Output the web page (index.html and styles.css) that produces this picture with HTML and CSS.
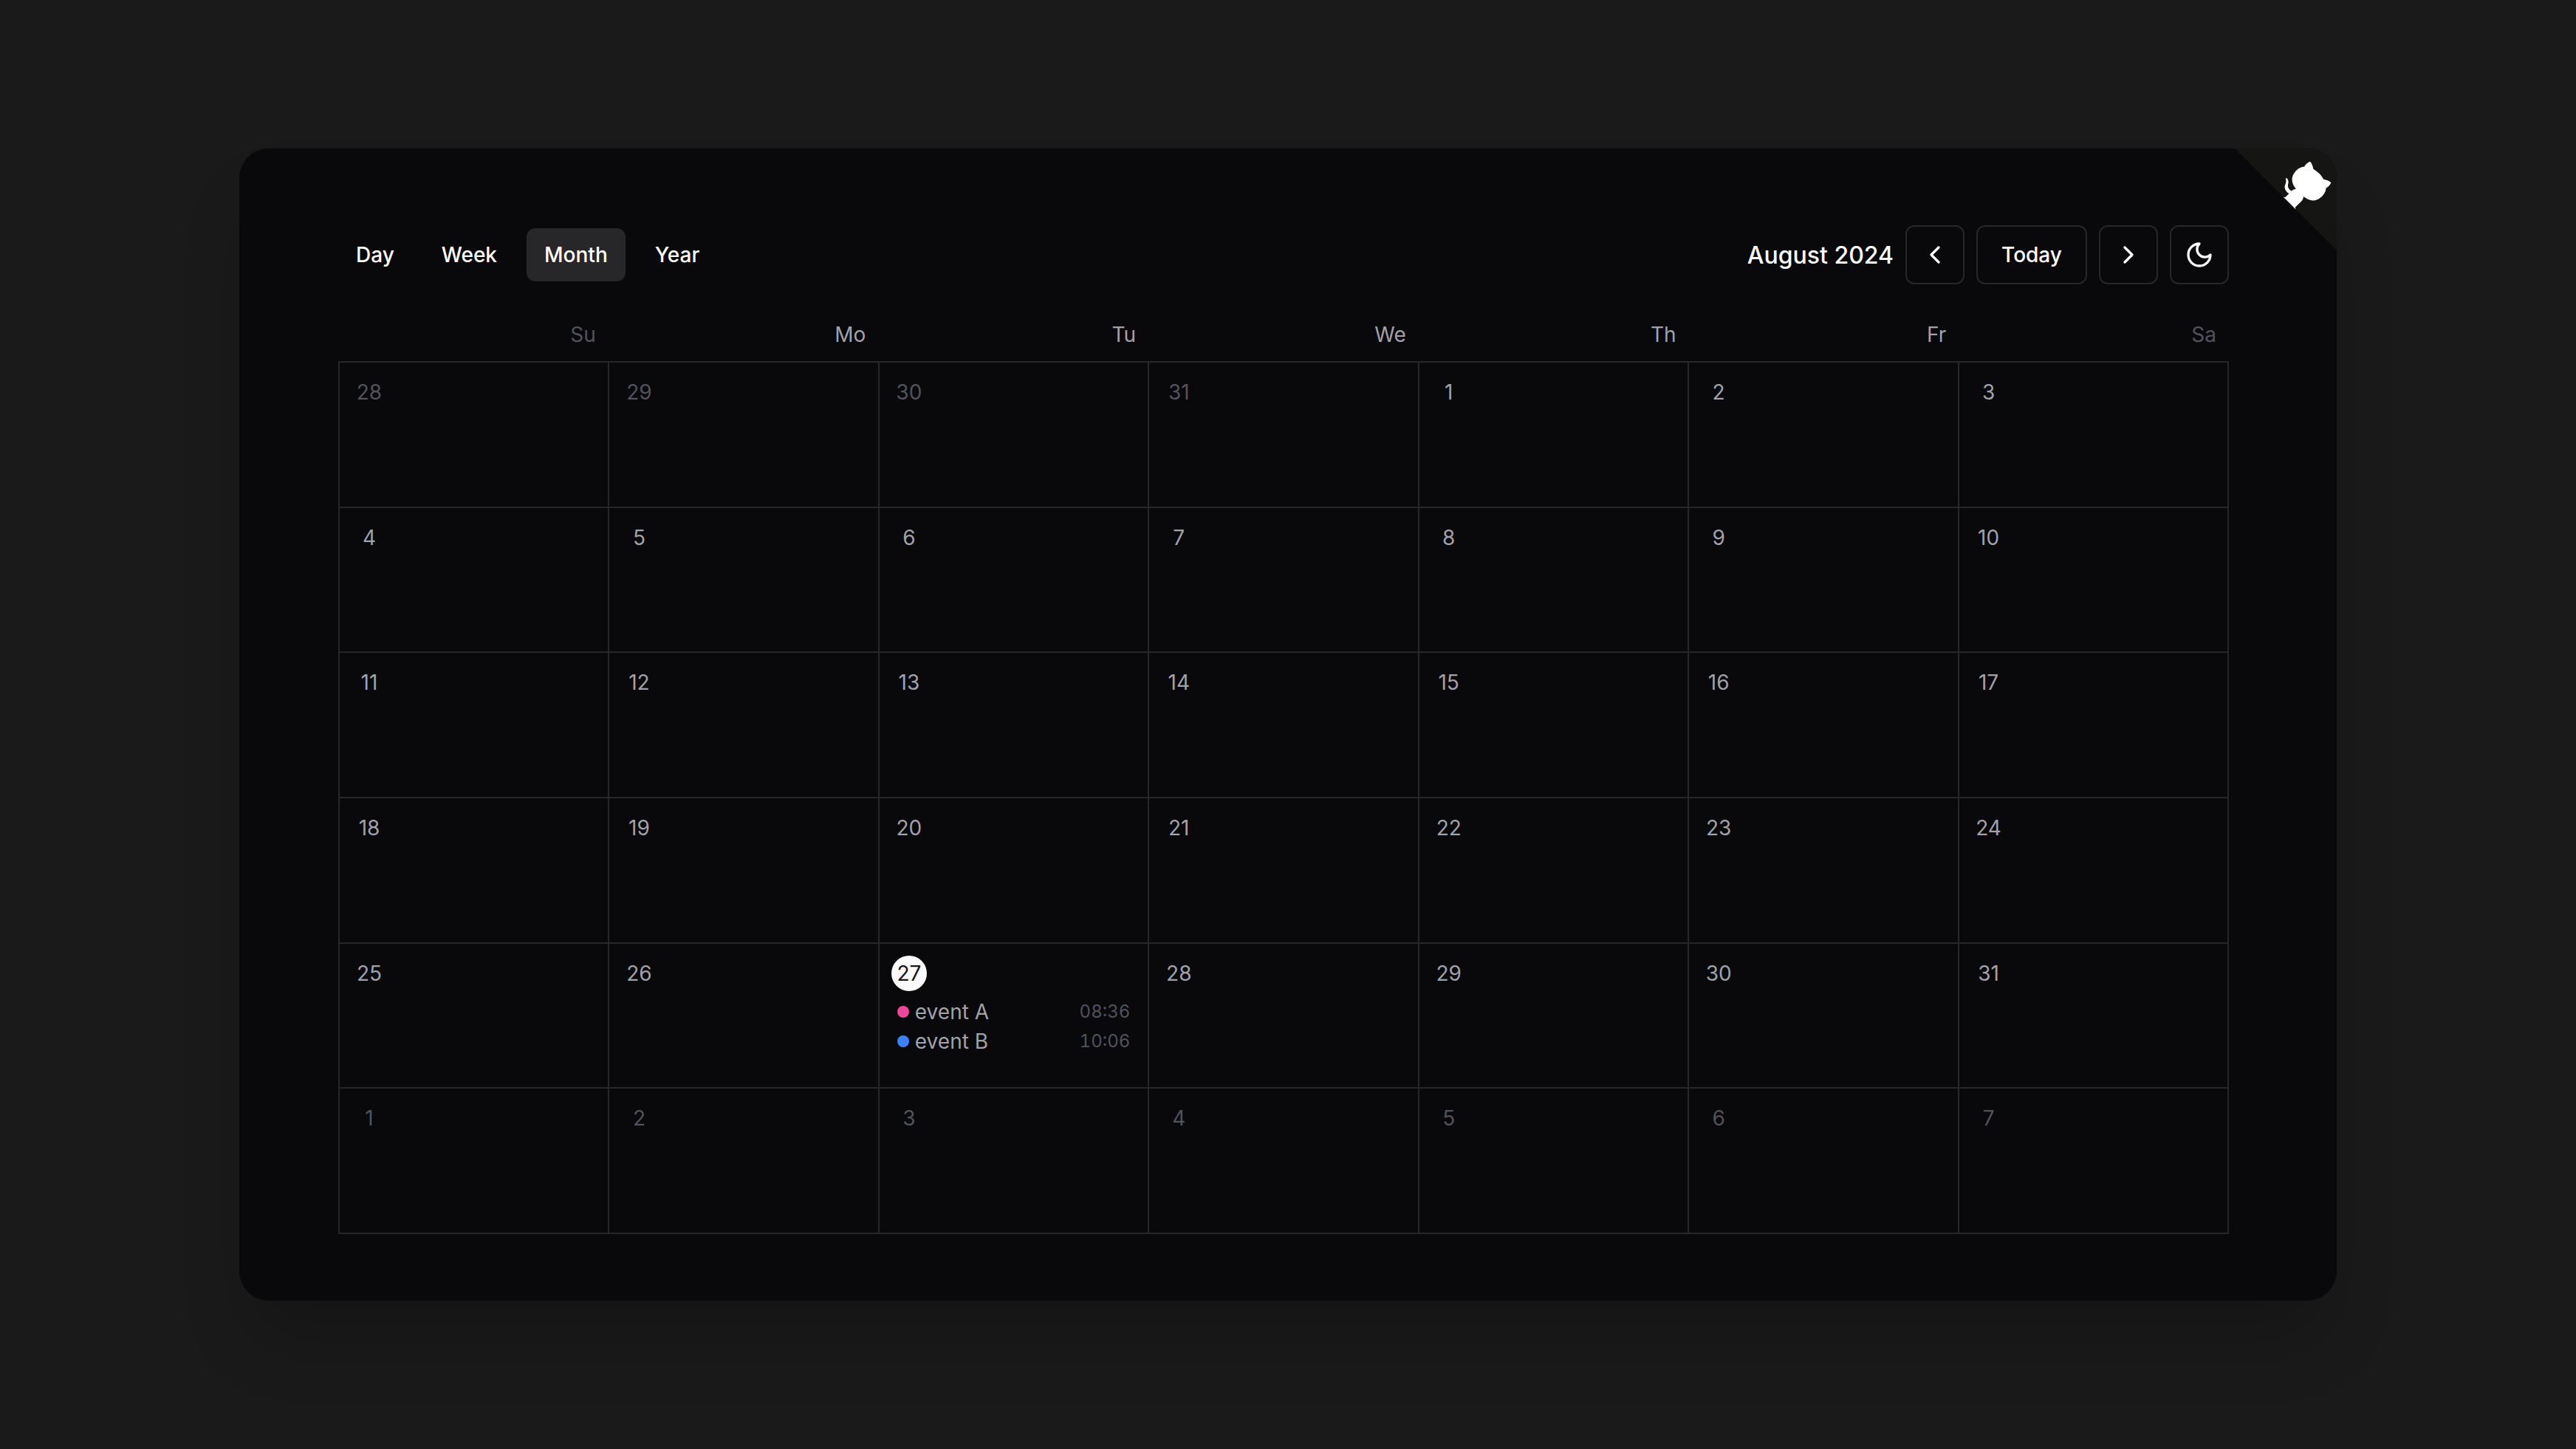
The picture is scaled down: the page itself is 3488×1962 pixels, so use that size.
FILE: index.html
```html
<!DOCTYPE html>
<html lang="en">
<head>
  <meta charset="UTF-8">
  <title>Calendar</title>
  <link rel="stylesheet" href="styles.css">
</head>
<body>
  <div class="card">
    <svg class="corner" width="160" height="160" viewBox="0 0 250 250" aria-hidden="true">
      <path d="M0,0 L115,115 L130,115 L142,142 L250,250 L250,0 Z"></path>
      <path class="octo" d="M128.3,109.0 C113.8,99.7 119.0,89.6 119.0,89.6 C122.0,82.7 120.5,78.6 120.5,78.6 C119.2,72.0 123.4,76.3 123.4,76.3 C127.3,80.9 125.5,87.3 125.5,87.3 C122.9,97.6 130.6,101.9 134.4,103.2"></path>
      <path class="octo" d="M115.0,115.0 C114.9,115.1 118.7,116.5 119.8,115.4 L133.7,101.6 C136.9,99.2 139.9,98.4 142.2,98.6 C133.8,88.0 127.5,74.4 143.8,58.0 C148.5,53.4 154.0,51.2 159.7,51.0 C160.3,49.4 163.2,43.6 171.4,40.1 C171.4,40.1 176.1,42.5 178.8,56.2 C183.1,58.6 187.2,61.8 190.9,65.4 C194.5,69.0 197.7,73.2 200.1,77.6 C213.8,80.2 216.3,84.9 216.3,84.9 C212.7,93.1 206.9,96.0 205.4,96.6 C205.1,102.4 203.0,107.8 198.3,112.5 C181.9,128.9 168.3,122.5 157.7,114.1 C157.9,116.9 156.7,120.9 152.7,124.9 L141.0,136.5 C139.8,137.7 141.6,141.9 141.8,141.8 Z"></path>
    </svg>

    <div class="toolbar">
      <div class="views">
        <button class="view">Day</button>
        <button class="view">Week</button>
        <button class="view active">Month</button>
        <button class="view">Year</button>
      </div>
      <div class="controls">
        <span class="title">August 2024</span>
        <button class="ctl square">
          <svg class="icon" viewBox="0 0 24 24"><path d="m15 18-6-6 6-6"></path></svg>
        </button>
        <button class="ctl today">Today</button>
        <button class="ctl square">
          <svg class="icon" viewBox="0 0 24 24"><path d="m9 18 6-6-6-6"></path></svg>
        </button>
        <button class="ctl square">
          <svg class="icon" viewBox="0 0 24 24"><path d="M12 3a6 6 0 0 0 9 9 9 9 0 1 1-9-9Z"></path></svg>
        </button>
      </div>
    </div>

    <div class="weekdays">
      <div class="weekday dim">Su</div>
      <div class="weekday">Mo</div>
      <div class="weekday">Tu</div>
      <div class="weekday">We</div>
      <div class="weekday">Th</div>
      <div class="weekday">Fr</div>
      <div class="weekday dim">Sa</div>
    </div>

    <div class="month">
      <div class="cell"><span class="date dim">28</span></div>
      <div class="cell"><span class="date dim">29</span></div>
      <div class="cell"><span class="date dim">30</span></div>
      <div class="cell"><span class="date dim">31</span></div>
      <div class="cell"><span class="date">1</span></div>
      <div class="cell"><span class="date">2</span></div>
      <div class="cell"><span class="date">3</span></div>

      <div class="cell"><span class="date">4</span></div>
      <div class="cell"><span class="date">5</span></div>
      <div class="cell"><span class="date">6</span></div>
      <div class="cell"><span class="date">7</span></div>
      <div class="cell"><span class="date">8</span></div>
      <div class="cell"><span class="date">9</span></div>
      <div class="cell"><span class="date">10</span></div>

      <div class="cell"><span class="date">11</span></div>
      <div class="cell"><span class="date">12</span></div>
      <div class="cell"><span class="date">13</span></div>
      <div class="cell"><span class="date">14</span></div>
      <div class="cell"><span class="date">15</span></div>
      <div class="cell"><span class="date">16</span></div>
      <div class="cell"><span class="date">17</span></div>

      <div class="cell"><span class="date">18</span></div>
      <div class="cell"><span class="date">19</span></div>
      <div class="cell"><span class="date">20</span></div>
      <div class="cell"><span class="date">21</span></div>
      <div class="cell"><span class="date">22</span></div>
      <div class="cell"><span class="date">23</span></div>
      <div class="cell"><span class="date">24</span></div>

      <div class="cell"><span class="date">25</span></div>
      <div class="cell"><span class="date">26</span></div>
      <div class="cell">
        <span class="date current">27</span>
        <ul class="events">
          <li class="event">
            <span class="dot pink"></span>
            <span class="event-name">event A</span>
            <span class="event-time">08:36</span>
          </li>
          <li class="event">
            <span class="dot blue"></span>
            <span class="event-name">event B</span>
            <span class="event-time">10:06</span>
          </li>
        </ul>
      </div>
      <div class="cell"><span class="date">28</span></div>
      <div class="cell"><span class="date">29</span></div>
      <div class="cell"><span class="date">30</span></div>
      <div class="cell"><span class="date">31</span></div>

      <div class="cell"><span class="date dim">1</span></div>
      <div class="cell"><span class="date dim">2</span></div>
      <div class="cell"><span class="date dim">3</span></div>
      <div class="cell"><span class="date dim">4</span></div>
      <div class="cell"><span class="date dim">5</span></div>
      <div class="cell"><span class="date dim">6</span></div>
      <div class="cell"><span class="date dim">7</span></div>
    </div>
  </div>
</body>
</html>
```

FILE: styles.css
```css
* {
  box-sizing: border-box;
}

html,
body {
  height: 100%;
}

body {
  margin: 0;
  display: flex;
  align-items: center;
  justify-content: center;
  background: #1a1a1a;
  font-family: Inter, "Liberation Sans", sans-serif;
  font-size: 28px;
  color: #a1a1aa;
}

.card {
  position: relative;
  width: 2840px;
  height: 1560px;
  padding: 104px 146px 90px 134px;
  background: #09090b;
  border-radius: 40px;
  overflow: hidden;
  box-shadow: 0 64px 100px -24px rgba(0, 0, 0, 0.22);
}

.corner {
  position: absolute;
  top: -8px;
  right: -14px;
  fill: #151513;
}

.corner .octo {
  fill: #fff;
}

.toolbar {
  display: flex;
  align-items: center;
  justify-content: space-between;
  height: 80px;
}

.views,
.controls {
  display: flex;
  align-items: center;
  gap: 16px;
}

button {
  font-family: inherit;
  font-size: 28px;
  font-weight: 500;
  color: #fff;
  background: transparent;
  border: none;
  padding: 0;
}

.view {
  height: 72px;
  padding: 0 24px;
  border-radius: 12px;
}

.view.active {
  background: #27272a;
}

.title {
  font-size: 32px;
  font-weight: 500;
  color: #fafafa;
}

.ctl {
  display: flex;
  align-items: center;
  justify-content: center;
  height: 80px;
  border: 2px solid #27272a;
  border-radius: 12px;
}

.square {
  width: 80px;
}

.today {
  width: 150px;
}

.icon {
  width: 40px;
  height: 40px;
  fill: none;
  stroke: #fff;
  stroke-width: 2;
  stroke-linecap: round;
  stroke-linejoin: round;
}

.weekdays {
  display: grid;
  grid-template-columns: repeat(7, 1fr);
  margin-top: 48px;
  padding-bottom: 16px;
}

.weekday {
  height: 40px;
  padding-right: 17px;
  line-height: 40px;
  text-align: right;
}

.weekday.dim,
.date.dim {
  color: #52525b;
}

.month {
  display: grid;
  grid-template-columns: repeat(7, 1fr);
  grid-template-rows: repeat(6, 1fr);
  height: 1182px;
  border-top: 2px solid #27272a;
  border-left: 2px solid #27272a;
}

.cell {
  padding: 16px;
  border-right: 2px solid #27272a;
  border-bottom: 2px solid #27272a;
  min-width: 0;
}

.date {
  display: flex;
  align-items: center;
  justify-content: center;
  width: 48px;
  height: 48px;
  border-radius: 50%;
}

.date.current {
  background: #fafafa;
  color: #18181b;
}

.events {
  list-style: none;
  margin: 8px 0 0;
  padding: 0 8px;
}

.event {
  display: flex;
  align-items: center;
  height: 40px;
}

.dot {
  width: 16px;
  height: 16px;
  margin-right: 8px;
  border-radius: 50%;
}

.dot.pink {
  background: #ec4899;
}

.dot.blue {
  background: #3b82f6;
}

.event-name {
  flex: 1;
}

.event-time {
  font-size: 24px;
  color: #52525b;
  font-variant-numeric: tabular-nums;
}
```
